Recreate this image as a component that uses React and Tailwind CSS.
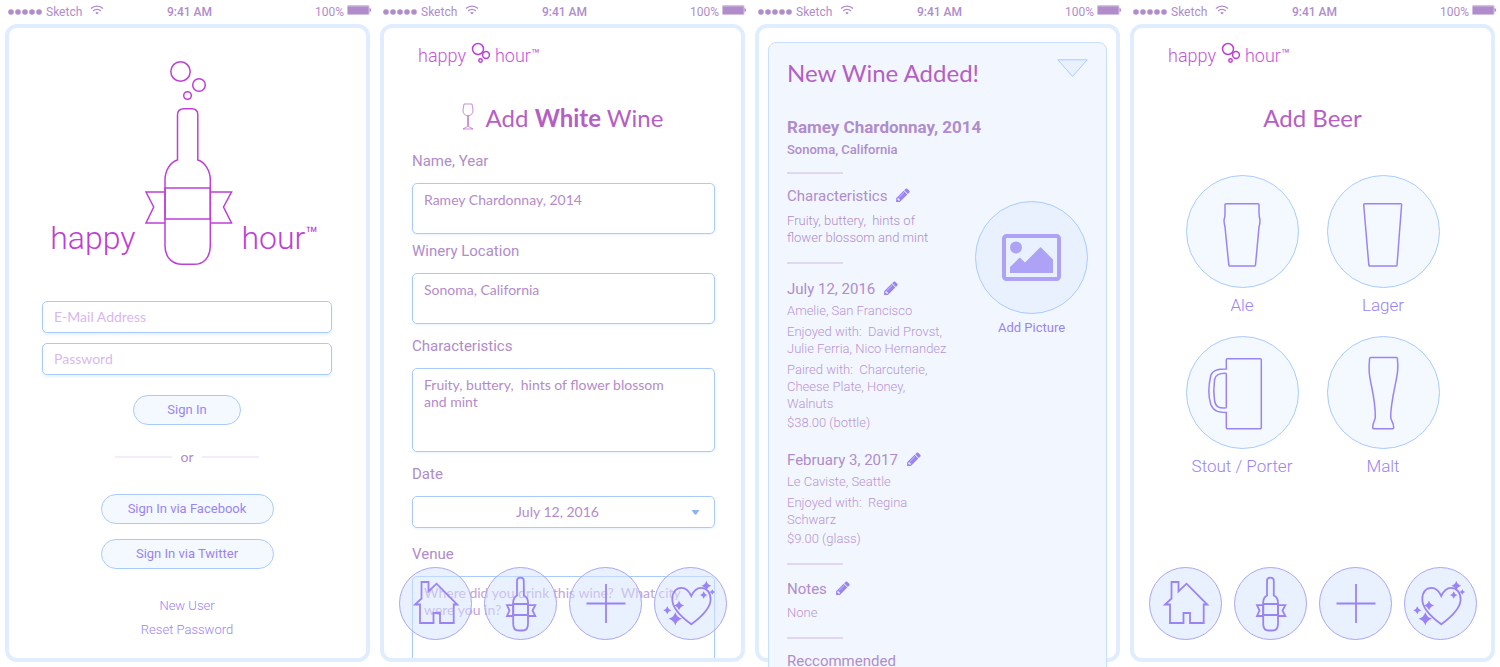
/**
 * App.jsx
 * Happy Hour mobile screens: sign in, add wine, wine added, add beer.
 */
import { useState } from 'react'

const PENCIL_PATH =
  'M491 1536l91-91-235-235-91 91v107h128v128h107zm523-928q0-22-22-22-10 0-17 7l-542 542q-7 7-7 17 0 22 22 22 10 0 17-7l542-542q7-7 7-17zm-54-192l416 416-832 832h-416v-416zm683 96q0 53-37 90l-166 166-416-416 166-165q36-38 90-38 53 0 91 38l235 234q37 39 37 91z'

const VISITS = [
  {
    date: 'July 12, 2016',
    venue: 'Amelie, San Francisco',
    people: 'Enjoyed with:  David Provst,\nJulie Ferria, Nico Hernandez',
    paired: 'Paired with:  Charcuterie,\nCheese Plate, Honey,\nWalnuts',
    price: '$38.00 (bottle)',
  },
  {
    date: 'February 3, 2017',
    venue: 'Le Caviste, Seattle',
    people: 'Enjoyed with:  Regina\nSchwarz',
    price: '$9.00 (glass)',
  },
]

function StatusBar() {
  return (
    <header className="-mr-px grid h-6 grid-cols-3 items-center pl-[3px] font-['Roboto',sans-serif] text-xs text-[#b08ccb]">
      <div className="flex items-center gap-1">
        <svg width="34" height="6" viewBox="0 0 34 6" fill="currentColor" aria-hidden="true">
          <circle cx="3" cy="3" r="2.8" />
          <circle cx="10" cy="3" r="2.8" />
          <circle cx="17" cy="3" r="2.8" />
          <circle cx="24" cy="3" r="2.8" />
          <circle cx="31" cy="3" r="2.8" />
        </svg>
        <span>Sketch</span>
        <svg className="mb-1 ml-1" width="14" height="10" viewBox="0 0 14 10" fill="none" stroke="currentColor" strokeWidth="1.4" aria-hidden="true">
          <path d="M1 3.6C4.4 .3 9.600 .3 13 3.600" />
          <path d="M3.200 5.900C5.300 3.900 8.700 3.900 10.800 5.900" />
          <path d="M7 9.500L5.200 7.700Q7 6.300 8.800 7.700Z" fill="currentColor" stroke="none" />
        </svg>
      </div>
      <span className="text-center font-medium">9:41 AM</span>
      <div className="flex items-center justify-end gap-[3px]">
        <span>100%</span>
        <svg className="mb-1" width="24" height="10" viewBox="0 0 24 10" aria-hidden="true">
          <rect width="22.500" height="10" rx="1.500" fill="#d3bfe2" />
          <rect x="1" y="1.500" width="20.500" height="7.500" fill="currentColor" />
          <path d="M23 3.500Q24 5 23 6.500Z" fill="currentColor" stroke="currentColor" />
        </svg>
      </div>
    </header>
  )
}

/**
 * One phone: status bar plus the rounded frame.
 */
function Phone({ clip = true, children }) {
  return (
    <section className="flex h-screen min-w-0 flex-col px-[5px] pb-[5px]">
      <StatusBar />
      <div className={`relative flex min-h-0 flex-1 flex-col rounded-xl border-4 border-[#e0edff] ${clip ? 'overflow-hidden' : ''}`}>
        {children}
      </div>
    </section>
  )
}

function SmallLogo() {
  return (
    <div className="mt-3 ml-[34px] flex h-8 shrink-0 items-center gap-1 font-['Roboto',sans-serif] text-lg font-light text-[#c455dc]">
      <span>happy</span>
      <svg className="mb-1.5 ml-px" width="20" height="22" viewBox="0 0 20 22" fill="none" stroke="#bd3fd8" strokeWidth="1.500" aria-hidden="true">
        <circle cx="7" cy="7" r="5.500" />
        <circle cx="15" cy="13" r="3.400" />
        <circle cx="9.500" cy="18.500" r="1.700" />
      </svg>
      <span className="flex items-center">
        hour<span className="mb-1 text-sm leading-5 font-normal">™</span>
      </span>
    </div>
  )
}

function BottleLogo() {
  return (
    <svg className="shrink-0" width="90" height="206" viewBox="144 60 90 206" fill="none" stroke="#bd3fd8" strokeWidth="1.500" aria-hidden="true">
      <circle cx="180.500" cy="71.500" r="9.700" />
      <circle cx="199" cy="85" r="6.300" />
      <circle cx="187.500" cy="95.500" r="3.800" />
      <path d="M177.500 160V115Q177.500 108.700 184 108.700H192Q197.800 108.700 197.800 115V160C205 162 210.300 171 210.300 180V246C210.300 258 203 264.300 194 264.300H182C173 264.300 165 258 165 246V180C165 171 170 162 177.500 160Z" />
      <path d="M165 188H210.300V219H165Z" />
      <path d="M165 192H146L153.700 207L146 223H165M210.300 192H231.500L223.500 207L231.500 223H210.300" />
    </svg>
  )
}

function Sparkle({ x, y, r }) {
  const k = r * 0.2
  return (
    <path
      fill="currentColor"
      stroke="none"
      d={`M${x} ${y - r}Q${x + k} ${y - k} ${x + r} ${y}Q${x + k} ${y + k} ${x} ${y + r}Q${x - k} ${y + k} ${x - r} ${y}Q${x - k} ${y - k} ${x} ${y - r}Z`}
    />
  )
}

const NAV_ITEMS = [
  {
    label: 'Home',
    icon: (
      <path d="M22.500 15H29.500V24.300L37.500 16.700L58.300 37.500H54.700V56H41V46H34.500V56H21V37.500H16L22.500 31.500Z" />
    ),
  },
  {
    label: 'Drinks',
    icon: (
      <>
        <path d="M33 28.500V14Q33 10.700 36.400 10.700Q39.800 10.700 39.800 14V28.500Q44 30.500 44 35.500V57Q44 63.500 38.500 63.500H34.700Q29.200 63.500 29.200 57V35.500Q29.200 30.500 33 28.500Z" />
        <path d="M29.200 37H44V48H29.200Z" />
        <path d="M29.200 38.200H23L25.500 43.500L23 49H29.200M44 38.200H51.300L48.500 43.500L51.300 49H44" />
      </>
    ),
  },
  { label: 'Add', icon: <path d="M37 17V56M17.500 36.500H56.500" /> },
  {
    label: 'Favorites',
    icon: (
      <>
        <path d="M37.300 29C35 24 31.500 20.800 27.500 20.800C22 20.800 18.300 25 18.300 32.500C18.300 42 28 50.500 37.300 57.300C46.500 50.500 56.600 42 56.600 32.500C56.600 25 52.500 20.800 47 20.800C43 20.800 39.500 24 37.300 29Z" />
        <Sparkle x={52.3} y={18.7} r={5} />
        <Sparkle x={49.7} y={28} r={3.8} />
        <Sparkle x={58.3} y={25} r={2.8} />
        <Sparkle x={25} y={38.5} r={5.2} />
        <Sparkle x={13.3} y={43.3} r={4} />
        <Sparkle x={21.3} y={51.7} r={6.8} />
      </>
    ),
  },
]

/**
 * Round translucent buttons that float over the bottom of a screen.
 */
function BottomNav() {
  return (
    <nav className="absolute inset-x-0 bottom-[18px] flex justify-center gap-3">
      {NAV_ITEMS.map((item) => (
        <button
          key={item.label}
          type="button"
          aria-label={item.label}
          className="size-[73px] rounded-full border border-[#a9a6f8] bg-[#d3e3ff]/50 text-[#9a84f5]"
        >
          <svg className="-m-px size-[73px]" viewBox="0 0 73 73" fill="none" stroke="currentColor" strokeWidth="1.800" aria-hidden="true">
            {item.icon}
          </svg>
        </button>
      ))}
    </nav>
  )
}

function PillButton({ className = '', children }) {
  return (
    <button
      type="button"
      className={`h-[30px] rounded-full border border-[#a9caff] bg-[#f4f9ff] font-['Roboto',sans-serif] text-[13px] text-[#9a84f5] ${className}`}
    >
      {children}
    </button>
  )
}

function SignInScreen() {
  const inputClass =
    "h-8 w-full rounded-[5px] border border-[#a9caff] bg-white px-[11px] pb-0.5 font-['Lato',sans-serif] text-sm text-[#b08ccb] shadow-[0_2px_3px_#e8f1ff] placeholder:text-[#d9b8ee]"
  return (
    <Phone>
      <h1 className="mt-8 flex items-end justify-center gap-2 pl-0.5 font-['Roboto',sans-serif] text-[32px] leading-10 font-light text-[#bd3fd8]">
        <span className="w-[86px] pb-2 text-right">happy</span>
        <BottleLogo />
        <span className="flex w-[86px] items-start pb-2">
          hour<span className="text-xl leading-8 font-normal">™</span>
        </span>
      </h1>
      <form className="mt-[35px] flex flex-col items-center pr-[34px] pl-[33px]" onSubmit={(event) => event.preventDefault()}>
        <input type="email" aria-label="E-Mail Address" placeholder="E-Mail Address" className={inputClass} />
        <input type="password" aria-label="Password" placeholder="Password" className={`mt-2.5 ${inputClass}`} />
        <PillButton className="mt-5 w-[108px]">Sign In</PillButton>
        <div className="mt-[22px] flex items-center gap-2 font-['Lato',sans-serif] text-sm text-[#b08ccb]">
          <span className="h-0.5 w-[57px] bg-[#f4ebfd]" />
          <span>or</span>
          <span className="h-0.5 w-[57px] bg-[#f4ebfd]" />
        </div>
        <PillButton className="mt-[27px] w-[173px]">Sign In via Facebook</PillButton>
        <PillButton className="mt-[15px] w-[173px]">Sign In via Twitter</PillButton>
        <div className="mt-[27px] flex flex-col items-center gap-1 font-['Roboto',sans-serif] text-[13px] leading-5 font-light text-[#9a84f5]">
          <a href="#new-user">New User</a>
          <a href="#reset-password">Reset Password</a>
        </div>
      </form>
    </Phone>
  )
}

function Field({ id, label, value, className = '', boxClass = '', textClass = 'text-[#b48bcb]' }) {
  return (
    <div className={className}>
      <label htmlFor={id} className="block font-['Roboto',sans-serif] text-[15px] leading-5 text-[#b08ccb]">{label}</label>
      <textarea
        id={id}
        defaultValue={value}
        className={`mt-3 block w-full resize-none rounded-[5px] border border-[#a9caff] bg-white px-[11px] py-[7px] font-['Lato',sans-serif] text-sm leading-[17px] shadow-[0_1px_3px_#e8f1ff] ${textClass} ${boxClass}`}
      />
    </div>
  )
}

function AddWineScreen() {
  const [date, setDate] = useState('July 12, 2016')

  return (
    <Phone>
      <SmallLogo />
      <h2 className="mt-[30px] flex h-8 shrink-0 items-center justify-center gap-3 font-['Lato',sans-serif] text-2xl text-[#b55fc6]">
        <svg className="mb-1" width="12" height="27" viewBox="0 0 12 27" fill="none" stroke="currentColor" strokeWidth=".7" aria-hidden="true">
          <path d="M2 1H10L11 7C11.300 10.500 9 12.700 6 12.700C3 12.700 .7 10.500 1 7ZM5.600 12.700V23.500L1 26H11L6.400 23.500V12.700" />
        </svg>
        <span>Add <strong className="font-bold">White</strong> Wine</span>
      </h2>
      <form className="pt-[17px] pr-[26px] pl-7">
        <Field id="name" label="Name, Year" value="Ramey Chardonnay, 2014" boxClass="h-[51px]" />
        <Field id="location" label="Winery Location" value="Sonoma, California" className="mt-[7px]" boxClass="h-[51px]" />
        <Field
          id="characteristics"
          label="Characteristics"
          value={'Fruity, buttery,  hints of flower blossom\nand mint'}
          className="mt-3"
          boxClass="h-[84px]"
        />
        <div className="mt-3">
          <label htmlFor="date" className="block font-['Roboto',sans-serif] text-[15px] leading-5 text-[#b08ccb]">Date</label>
          <div className="relative mt-3">
            <select
              id="date"
              value={date}
              onChange={(event) => setDate(event.target.value)}
              className="block h-8 w-full appearance-none rounded-[5px] border border-[#a9caff] bg-white pr-3 text-center font-['Lato',sans-serif] text-sm text-[#b48bcb] shadow-[0_1px_3px_#e8f1ff] [text-align-last:center]"
            >
              <option>July 12, 2016</option>
              <option>February 3, 2017</option>
            </select>
            <svg className="pointer-events-none absolute top-3.5 right-[15px]" width="9" height="5" viewBox="0 0 9 5" aria-hidden="true">
              <path d="M.5 0H8.500L5.500 4.300Q4.500 5.200 3.500 4.300Z" fill="#8fb4f0" />
            </svg>
          </div>
        </div>
        <Field
          id="venue"
          label="Venue"
          value={'Where did you drink this wine?  What city\nwere you in?'}
          className="mt-4"
          boxClass="h-[100px]"
          textClass="text-[#c3a2d8]"
        />
      </form>
      <BottomNav />
    </Phone>
  )
}

function Rule({ className = '' }) {
  return <hr className={`h-0.5 w-14 border-0 bg-[#e2d7f2] ${className}`} />
}

function EditableHeading({ className = '', children }) {
  return (
    <h4 className={`flex h-5 items-center gap-2 text-[15px] font-normal text-[#b08ccb] ${className}`}>
      {children}
      <button type="button" aria-label={`Edit ${children}`} className="text-[#9a84f5]">
        <svg className="block size-4" viewBox="0 100 1792 1792" fill="currentColor" aria-hidden="true">
          <path d={PENCIL_PATH} />
        </svg>
      </button>
    </h4>
  )
}

function WineAddedScreen() {
  return (
    <Phone clip={false}>
      <article className="mx-[9px] mt-3.5 rounded-lg border border-[#c9dfff] bg-[#f2f7ff] px-[18px] pb-12 font-['Roboto',sans-serif]">
        <div className="mt-3.5 flex items-start justify-between">
          <h2 className="font-['Lato',sans-serif] text-2xl leading-8 text-[#b55fc6]">New Wine Added!</h2>
          <button type="button" aria-label="Collapse" className="mt-0.5">
            <svg className="block" width="31" height="19" viewBox="0 0 31 19" fill="#e9f1ff" stroke="#a9caff" aria-hidden="true">
              <path d="M.8 .8H30.200L15.500 17.500Z" />
            </svg>
          </button>
        </div>
        <h3 className="mt-[26px] text-[17px] leading-6 font-bold text-[#b08ccb]">Ramey Chardonnay, 2014</h3>
        <p className="mt-px text-[13px] leading-5 font-medium text-[#b08ccb]">Sonoma, California</p>
        <div className="mt-3 flex justify-between">
          <div className="whitespace-pre text-[13px] leading-[17px] font-light text-[#b995d2]">
            <Rule />
            <EditableHeading className="mt-3">Characteristics</EditableHeading>
            <p className="mt-1.5 text-[#b08ccb]">{'Fruity, buttery,  hints of\nflower blossom and mint'}</p>
            <Rule className="mt-4" />
            {VISITS.map((visit, i) => (
              <div key={visit.date} className={i === 0 ? 'mt-[15px]' : 'mt-[19px]'}>
                <EditableHeading>{visit.date}</EditableHeading>
                <p className="mt-[3px]">{visit.venue}</p>
                <p className="mt-1">{visit.people}</p>
                {visit.paired ? <p className="mt-1">{visit.paired}</p> : null}
                <p className="mt-0.5">{visit.price}</p>
              </div>
            ))}
            <Rule className="mt-4" />
            <EditableHeading className="mt-3.5">Notes</EditableHeading>
            <p className="mt-[5px]">None</p>
            <Rule className="mt-4" />
            <h4 className="mt-3 text-[15px] leading-5 font-normal text-[#b08ccb]">Reccommended</h4>
          </div>
          <button type="button" className="mt-[29px] flex flex-col items-center gap-1 self-start text-[13px] leading-5 text-[#9a84f5]">
            <span className="flex size-[113px] items-center justify-center rounded-full border border-[#a9caff] bg-[#e9f1ff]">
              <svg width="59" height="47" viewBox="0 0 59 47" fill="none" aria-hidden="true">
                <rect x="2" y="2" width="55" height="43" rx="2.500" stroke="#aea2f6" strokeWidth="4" />
                <circle cx="14" cy="13.500" r="6" fill="#aea2f6" />
                <path d="M8 39V33L17.700 23.500L23 28.500L38.500 13L51 25.500V39Z" fill="#aea2f6" />
              </svg>
            </span>
            Add Picture
          </button>
        </div>
      </article>
    </Phone>
  )
}

const BEERS = [
  {
    name: 'Ale',
    icon: (
      <path d="M40 28.700H72Q73 28.700 73 29.700V38Q73 41 74 45Q74 49 73 52L69.500 90Q69.400 91 68.400 91H44Q43 91 42.800 90L39 52Q38 48 38 45Q39.200 41 39 38V29.700Q39 28.700 40 28.700Z" />
    ),
  },
  {
    name: 'Lager',
    icon: <path d="M37.700 28.700H73.700Q74.700 28.700 74.600 29.700L70 90Q69.800 91 68.800 91H43Q42 91 41.800 90L36.700 29.700Q36.700 28.700 37.700 28.700Z" />,
  },
  {
    name: 'Stout / Porter',
    icon: (
      <>
        <path d="M40.300 33V23.700Q40.300 22.700 41.300 22.700H74.300Q75.300 22.700 75.300 23.700V91.700Q75.300 92.700 74.300 92.700H41.300Q40.300 92.700 40.300 91.700V76.500C32 76.500 27.500 75 24.800 68.500C22.500 61 22.500 49 24.800 39.500C26.500 34.500 31 33 40.300 33Z" />
        <path d="M39.300 37.300Q40.300 37.300 40.300 38.300V71Q40.300 72 39.300 72C33 72.300 29.800 71 28.600 65C27.500 58 27.500 51 28.600 43.500C29.500 38.500 33 37.300 39.300 37.300Z" />
      </>
    ),
  },
  {
    name: 'Malt',
    icon: (
      <path d="M43.700 21.500H69.300Q70.300 21.500 70.400 22.500C71.500 33 70.500 38 68 50C65.500 62 63.600 72 63.700 81C63.900 85 66.500 85.500 66.700 91.500Q66.700 92.700 65.700 92.700H46.700Q45.700 92.700 45.700 91.500C45.900 85.500 48.100 85 48.300 81C48.400 72 47 62 44.500 50C42 38 41.500 33 42.600 22.500Q42.700 21.500 43.700 21.500Z" />
    ),
  },
]

function AddBeerScreen() {
  return (
    <Phone>
      <SmallLogo />
      <h2 className="mt-[30px] text-center font-['Lato',sans-serif] text-2xl leading-8 text-[#b55fc6]">Add Beer</h2>
      <div className="mx-auto mt-[41px] grid grid-cols-2 gap-x-7 gap-y-[15px]">
        {BEERS.map((beer) => (
          <button key={beer.name} type="button" className="flex w-[113px] flex-col items-center gap-0.5 font-['Roboto',sans-serif] text-[17px] leading-[31px] font-light whitespace-nowrap text-[#9a84f5]">
            <span className="size-[113px] rounded-full border border-[#a9caff] bg-[#f4f9ff]">
              <svg className="-m-px size-[113px]" viewBox="0 0 113 113" fill="none" stroke="currentColor" strokeWidth="1.500" aria-hidden="true">
                {beer.icon}
              </svg>
            </span>
            {beer.name}
          </button>
        ))}
      </div>
      <BottomNav />
    </Phone>
  )
}

export default function App() {
  return (
    <main className="grid h-screen grid-cols-4 overflow-hidden bg-white">
      <SignInScreen />
      <AddWineScreen />
      <WineAddedScreen />
      <AddBeerScreen />
    </main>
  )
}
